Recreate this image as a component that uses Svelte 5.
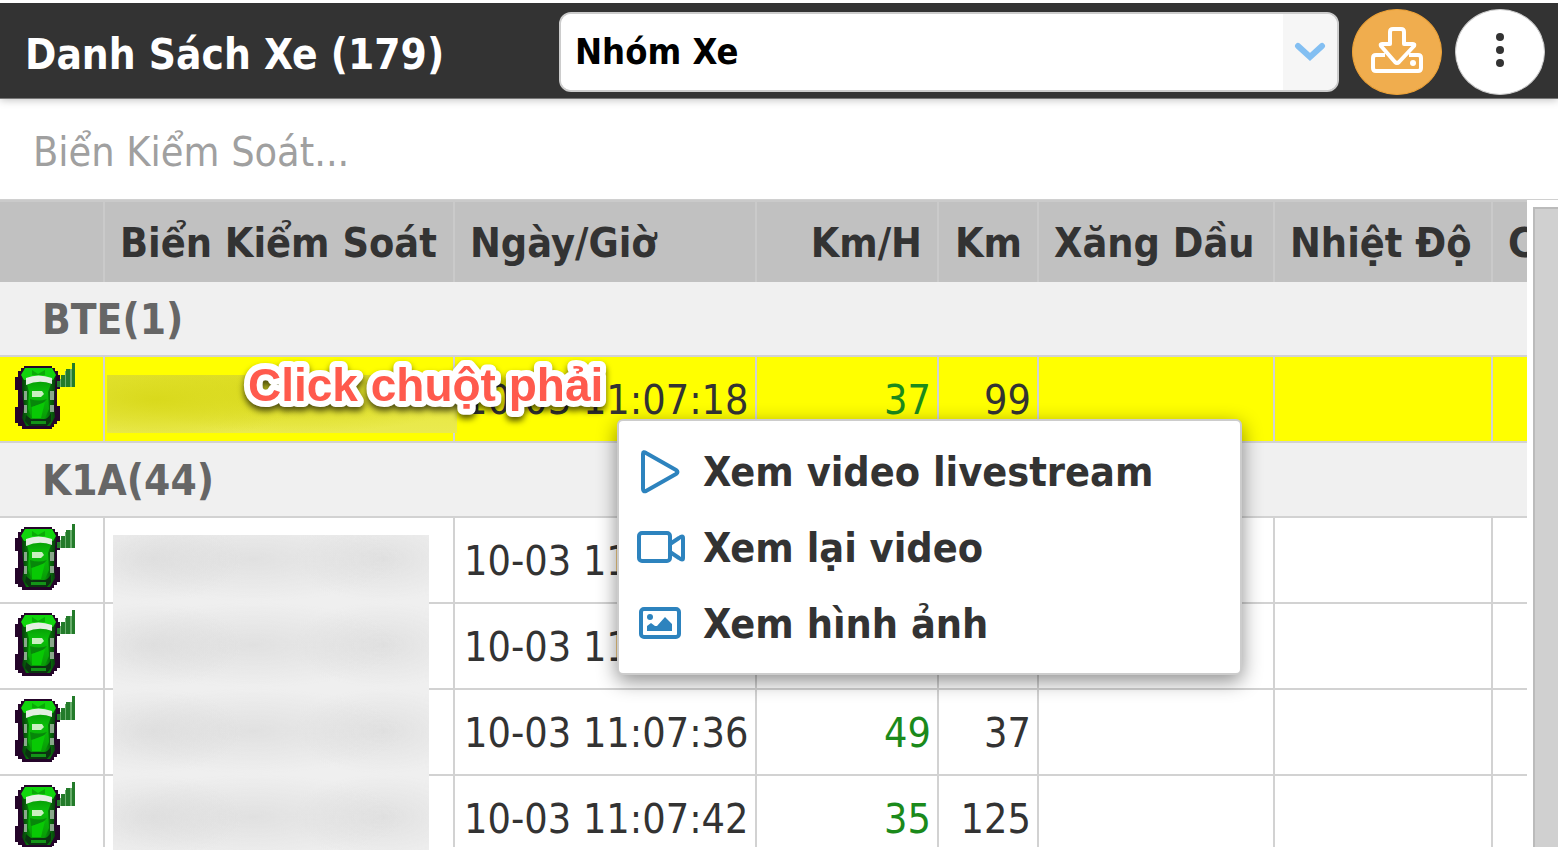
<script>
  const columns = [
    { label: '', cls: 'c-icon' },
    { label: 'Biển Kiểm Soát', cls: 'c-plate' },
    { label: 'Ngày/Giờ', cls: 'c-time' },
    { label: 'Km/H', cls: 'c-speed', num: true },
    { label: 'Km', cls: 'c-km', num: true },
    { label: 'Xăng Dầu', cls: 'c-fuel' },
    { label: 'Nhiệt Độ', cls: 'c-temp' },
    { label: 'C', cls: 'c-last' }
  ];
  const groups = [
    { name: 'BTE(1)', rows: [{ time: '10-03 11:07:18', speed: 37, km: 99, selected: true }] },
    {
      name: 'K1A(44)',
      rows: [
        { time: '10-03 11', speed: '', km: '' },
        { time: '10-03 11', speed: '', km: '' },
        { time: '10-03 11:07:36', speed: 49, km: 37 },
        { time: '10-03 11:07:42', speed: 35, km: 125 }
      ]
    }
  ];
</script>

{#snippet car()}
  <svg class="car" viewBox="0 0 62 67" aria-hidden="true">
    <path d="M9 3h28v2h3v3h3v4h2v14h-3v17h3v15h-3v3h-3v3h-2v2H7v-3H3v-3H0V44h3V27H0V14h3V8h3V5h3z" fill="#25052a" />
    <path d="M10 5h27l4 7-1 12-1 20 1 10-5 9H11l-4-8 2-11-2-18V12z" fill="url(#car-body)" />
    <path d="M10 5h27l4 7-3 5H9l-3-5z" fill="#10d50c" />
    <path d="M17 7l6 4 7-4v5H17z" fill="#0aa908" />
    <path d="M12 21q11-6 24 0l-3 8 1 17-5 11H18l-5-11 1-17z" fill="url(#car-roof)" />
    <path d="M11 15q12-5 26 0v6q-13-5-26 1z" fill="#e4efe2" />
    <path d="M17 28h10l2 3-3 3h-9z" fill="#c9efc0" />
    <path d="M15 36q9 3 17 0l-5 5-11 3z" fill="#07870a" />
    <path d="M17 44l13-5-4 16h-9z" fill="#08c904" />
    <path d="M11 52q5 5 7 4h11q4 0 7-6v8l-4 5H14l-4-5z" fill="#0b3410" />
    <path d="M16 58h15v3H16z" fill="#149418" />
    <path d="M9 28h3v9H9zM35 28h4v9h-4zM9 42h3v8H9zM35 42h4v7h-4z" fill="#8aa88b" />
    <path d="M42 18h3v6h-3zM46 12h4v12h-4zM51 6h4v18h-4zM57 0h3v24h-3z" fill="#237b2a" />
    <path d="M45 16h1v8h-1zM50 8h1v16h-1zM55 6h2v18h-2z" fill="#69ad6c" />
  </svg>
{/snippet}

<svg class="defs" width="0" height="0" aria-hidden="true">
  <defs>
    <linearGradient id="car-body" x1="0" x2="1" y1="0" y2="0">
      <stop offset="0" stop-color="#063c0b" />
      <stop offset="0.25" stop-color="#079008" />
      <stop offset="0.7" stop-color="#079008" />
      <stop offset="1" stop-color="#063c0b" />
    </linearGradient>
    <linearGradient id="car-roof" x1="0" x2="0" y1="0" y2="1">
      <stop offset="0" stop-color="#07a006" />
      <stop offset="0.3" stop-color="#0bbf0a" />
      <stop offset="1" stop-color="#089a06" />
    </linearGradient>
  </defs>
</svg>

<main>
  <header>
    <h1>Danh Sách Xe (179)</h1>
    <div class="picker">
      <select aria-label="Nhóm Xe"><option>Nhóm Xe</option></select>
      <span class="arrow">
        <svg width="32" height="22" viewBox="0 0 32 22" aria-hidden="true">
          <path d="M4 5l12 11L28 5" fill="none" stroke="#83bff2" stroke-width="6" stroke-linecap="round" />
        </svg>
      </span>
    </div>
    <button class="round download" aria-label="Tải xuống">
      <svg width="52" height="46" viewBox="0 0 52 46" fill="none" stroke="#fff" stroke-width="4" stroke-linejoin="round" aria-hidden="true">
        <path d="M14 28H5q-3 0-3 3v10q0 3 3 3h42q3 0 3-3V31q0-3-3-3h-9" />
        <path d="M22 2h8q3 0 3 3v12h9q2 0 1 2L28 35q-2 2-4 0L10 19q-1-2 1-2h8V5q0-3 3-3z" />
        <circle cx="42" cy="36" r="3" fill="#fff" stroke="none" />
      </svg>
    </button>
    <button class="round" aria-label="Thêm">
      <svg width="10" height="36" viewBox="0 0 10 36" fill="#333" aria-hidden="true">
        <circle cx="5" cy="5" r="4" /><circle cx="5" cy="18" r="4" /><circle cx="5" cy="31" r="4" />
      </svg>
    </button>
  </header>

  <input class="search" type="text" placeholder="Biển Kiểm Soát..." aria-label="Biển Kiểm Soát" />

  <div class="list">
    <div class="viewport">
      <table>
        <thead>
          <tr>
            {#each columns as col}
              <th class={col.cls} class:num={col.num} scope="col">{col.label}</th>
            {/each}
          </tr>
        </thead>
        <tbody>
          {#each groups as group}
            <tr class="group"><th colspan="8" scope="rowgroup">{group.name}</th></tr>
            {#each group.rows as row}
              <tr class="row" class:selected={row.selected}>
                <td class="vehicle">{@render car()}</td>
                <td></td>
                <td>{row.time}</td>
                <td class="num speed">{row.speed}</td>
                <td class="num">{row.km}</td>
                <td></td>
                <td></td>
                <td></td>
              </tr>
            {/each}
          {/each}
        </tbody>
      </table>
    </div>
    <div class="scrollbar"></div>
    <div class="mask mask-selected"></div>
    <div class="mask mask-plates"></div>
    <svg class="note" width="380" height="64">
      <text x="10" y="42">Click chuột phải</text>
    </svg>
    <div class="menu" role="menu">
      <button role="menuitem">
        <svg width="48" height="44" viewBox="0 0 48 44" aria-hidden="true">
          <path d="M6 4q0-3 3-1l30 17q3 2 0 4L9 41q-3 1-3-2z" fill="none" stroke="#2d83be" stroke-width="4" stroke-linejoin="round" />
        </svg>
        Xem video livestream
      </button>
      <button role="menuitem">
        <svg width="48" height="44" viewBox="0 0 48 44" fill="none" stroke="#2d83be" stroke-width="4" stroke-linejoin="round" aria-hidden="true">
          <rect x="2" y="7" width="31" height="28" rx="3" />
          <path d="M33 18l9-6q4-3 4 0v20q0 3-4 0l-9-6" />
        </svg>
        Xem lại video
      </button>
      <button role="menuitem">
        <svg width="48" height="44" viewBox="0 0 48 44" aria-hidden="true">
          <rect x="4" y="7" width="38" height="28" rx="3" fill="none" stroke="#2d83be" stroke-width="4" />
          <circle cx="13" cy="15" r="3" fill="#2d83be" />
          <path d="M10 29v-5l4-3 4 3h2l8-9 7 7v7z" fill="#2d83be" />
        </svg>
        Xem hình ảnh
      </button>
    </div>
  </div>
</main>

<style>
  :global(body) { margin: 0; background: #fff; }
  .defs { position: absolute; }
  main {
    box-sizing: border-box;
    height: 100vh;
    padding: 3px 0;
    display: flex;
    flex-direction: column;
    overflow: hidden;
    font-family: "DejaVu Sans Condensed", "DejaVu Sans", sans-serif;
    font-size: 41px;
    color: #333;
  }
  header {
    box-sizing: border-box;
    flex: none;
    height: 96px;
    padding: 2px 13px 0 25px;
    display: flex;
    align-items: center;
    background: #333;
    border-bottom: 1px solid #777;
    box-shadow: 0 1px 8px rgba(0, 0, 0, 0.25);
    clip-path: inset(0 0 -12px 0);
    position: relative;
    z-index: 1;
  }
  h1 {
    margin: 0;
    padding-top: 5px;
    flex: 1;
    min-width: 0;
    font-size: 42px;
    color: #fff;
    white-space: nowrap;
  }
  .picker {
    box-sizing: border-box;
    flex: none;
    width: 52%;
    max-width: 780px;
    height: 80px;
    display: flex;
    border: 2px solid #ccc;
    border-radius: 12px;
    background: #fff;
    overflow: hidden;
  }
  select {
    appearance: none;
    flex: 1;
    border: 0;
    padding: 0 14px;
    background: #fff;
    color: #000;
    font: bold 36px "DejaVu Sans Condensed", "DejaVu Sans", sans-serif;
  }
  .arrow {
    width: 54px;
    display: flex;
    align-items: center;
    justify-content: center;
    background: #f6f6f6;
    pointer-events: none;
  }
  .round {
    width: 90px;
    height: 86px;
    flex: none;
    margin-left: 13px;
    padding: 0;
    display: flex;
    align-items: center;
    justify-content: center;
    border: 1px solid #ccc;
    border-radius: 50%;
    background: #fff;
  }
  .round svg { margin-bottom: 3px; }
  .download { background: #f0ad4e; border-color: #eea236; }
  .search {
    box-sizing: border-box;
    flex: none;
    width: 100%;
    height: 100px;
    padding: 6px 33px 0;
    border: 0;
    background: #fff;
    font: 41px "DejaVu Sans Condensed", "DejaVu Sans", sans-serif;
    color: #333;
    outline: 0;
  }
  .search::placeholder { color: #a0a0a0; opacity: 1; }
  .list { flex: 1; min-height: 0; display: flex; position: relative; border-top: 1px solid #d0d0d0; }
  .viewport { flex: 1; min-width: 0; overflow: hidden; }
  .scrollbar {
    box-sizing: border-box;
    width: 25px;
    margin: 7px 0 0 6px;
    border: 2px solid #bbb;
    border-width: 2px 0 0 2px;
    background: #d0d0d0;
  }
  table { width: 100%; table-layout: fixed; border-collapse: separate; border-spacing: 0; }
  th, td {
    box-sizing: border-box;
    padding: 2px 6px 0 9px;
    overflow: hidden;
    white-space: nowrap;
    text-align: left;
    border-right: 2px solid #d2d2d2;
    border-bottom: 2px solid #d2d2d2;
  }
  thead th {
    height: 82px;
    padding: 2px 15px 0;
    background: #c1c1c1;
    border-right-color: #cacaca;
    border-top: 2px solid #cacaca;
    border-bottom: 0;
  }
  .c-icon { width: 105px; }
  .c-plate { width: 350px; }
  .c-time { width: 302px; }
  .c-speed { width: 182px; }
  .c-km { width: 100px; }
  .c-fuel { width: 236px; }
  .c-temp { width: 218px; }
  .num { text-align: right; }
  th:last-child, td:last-child { border-right: 0; }
  .group th { height: 75px; padding: 2px 42px 0; background: #f0f0f0; color: #666; font-size: 42px; }
  .row td { height: 86px; }
  .selected td { background: #ff0; }
  .row .speed { color: #1b8a1b; }
  td.vehicle { padding: 0 0 0 15px; }
  .car { display: block; width: 62px; height: 67px; margin-bottom: 5px; }
  .mask { position: absolute; }
  .mask-selected {
    left: 107px;
    top: 175px;
    width: 350px;
    height: 58px;
    background:
      radial-gradient(ellipse 150px 40px at 50px 24px, #d9d91c, transparent),
      radial-gradient(ellipse 180px 40px at 190px 18px, #d9d91c, transparent),
      linear-gradient(#e4e430, #eaea50);
  }
  .mask-plates {
    left: 113px;
    top: 335px;
    width: 316px;
    height: 315px;
    background:
      radial-gradient(ellipse 90px 43px at 40px 43px, rgba(215, 215, 215, 0.6), rgba(215, 215, 215, 0)) 0 -19px / 100% 86px,
      radial-gradient(ellipse 150px 43px at 140px 43px, rgba(215, 215, 215, 0.6), rgba(215, 215, 215, 0)) 0 -19px / 100% 86px,
      radial-gradient(ellipse 90px 43px at 270px 43px, rgba(215, 215, 215, 0.6), rgba(215, 215, 215, 0)) 0 -19px / 100% 86px,
      #efefef;
  }
  .note {
    position: absolute;
    left: 238px;
    top: 159px;
    overflow: visible;
    filter: drop-shadow(0 4px 3px rgba(0, 0, 0, 0.65));
  }
  .note text {
    font: bold 46px "Liberation Sans", Arial, sans-serif;
    fill: #ff5a4d;
    stroke: #fff;
    stroke-width: 12px;
    stroke-linejoin: round;
    paint-order: stroke;
  }
  .menu {
    box-sizing: border-box;
    position: absolute;
    left: 617px;
    top: 219px;
    width: 625px;
    padding: 13px 0 11px;
    background: #fff;
    border: 2px solid #ccc;
    border-radius: 6px;
    box-shadow: 0 6px 20px rgba(0, 0, 0, 0.45);
  }
  .menu button {
    width: 100%;
    height: 76px;
    display: flex;
    align-items: center;
    gap: 18px;
    padding: 0 18px;
    border: 0;
    background: none;
    color: #333;
    font: bold 41px "DejaVu Sans Condensed", "DejaVu Sans", sans-serif;
    white-space: nowrap;
  }
</style>
